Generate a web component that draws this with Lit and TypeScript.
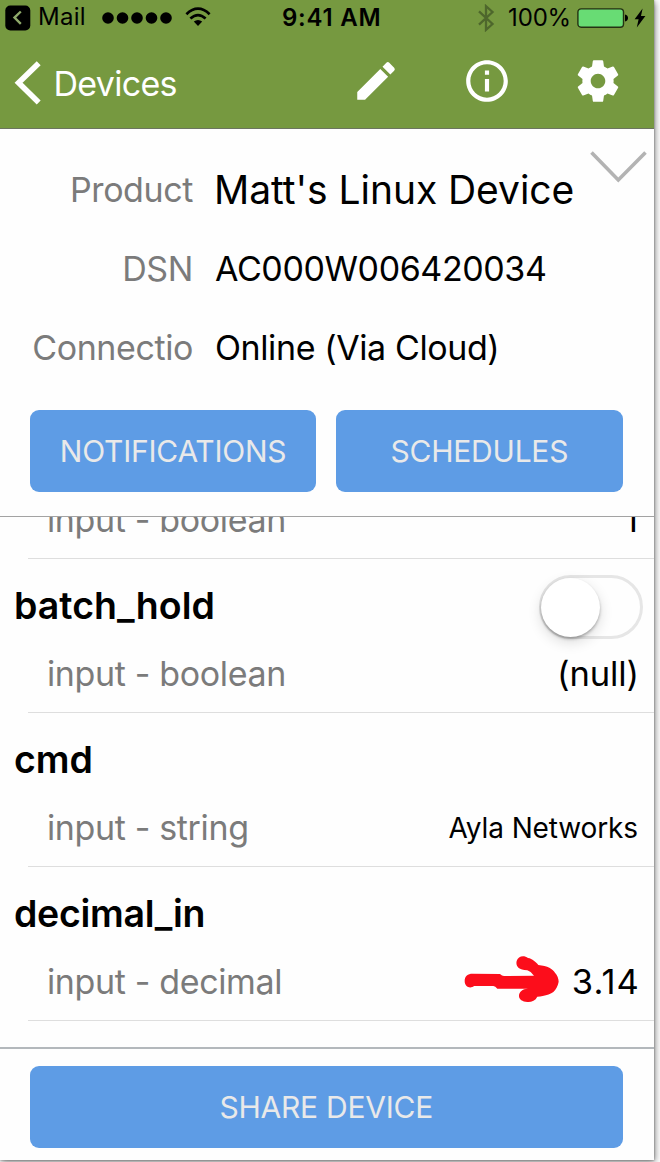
import { LitElement, html, css, svg } from "lit";
import { customElement } from "lit/decorators.js";

interface Property { name: string; type: string; value: string; cls: string; toggle?: boolean; arrow?: boolean; }

const PROPERTIES: Property[] = [
  { name: "", type: "boolean", value: "1", cls: "one" },
  { name: "batch_hold", type: "boolean", value: "(null)", cls: "null", toggle: true },
  { name: "cmd", type: "string", value: "Ayla Networks", cls: "small" },
  { name: "decimal_in", type: "decimal", value: "3.14", cls: "num", arrow: true },
];

@customElement("app-root")
export class AppRoot extends LitElement {
  static styles = css`
    :host { display: block; width: 660px; height: 1162px; overflow: hidden; background: #fff; font-family: Inter, sans-serif; color: #000; }
    * { box-sizing: border-box; }
    svg { display: block; flex: none; }
    .frame { width: 654px; height: 1160px; display: flex; flex-direction: column; background: #fefefe; box-shadow: 0 0 2px rgba(0,0,0,.4), 1px 2px 7px rgba(0,0,0,.5); }
    .top { flex: none; height: 129px; background: #769940; border-bottom: 1px solid #6c7560; }
    .status { height: 35px; display: grid; grid-template-columns: 277px auto 1fr; align-items: center; font-size: 24px; line-height: 35px; padding: 0 8px 0 5px; }
    .left, .right { display: flex; align-items: center; height: 35px; }
    .right { justify-content: flex-end; }
    .mail { margin-left: 7px; letter-spacing: .3px; line-height: 34px; height: 35px; }
    .dots { margin-left: 15px; }
    .wifi { margin-left: 12px; margin-bottom: 1px; }
    .time { font-weight: 600; letter-spacing: .77px; }
    .pct { margin-left: 13px; letter-spacing: -.18px; line-height: 37px; }
    .battery { margin-left: 6px; }
    .bolt { margin-left: 5px; }
    .nav { display: flex; align-items: center; height: 93px; color: #fff; padding: 0 31px 0 14px; }
    .back { display: flex; align-items: center; flex: 1; font-size: 34px; letter-spacing: -.7px; line-height: 40px; padding-top: 3px; gap: 11.5px; }
    .back span { padding-top: 1px; }
    .actions { display: flex; gap: 61px; padding-bottom: 1.5px; }
    .info { flex: none; height: 388px; border-bottom: 1.5px solid #a3a3a3; padding: 21.5px 31.5px 0 30px; position: relative; }
    .field { display: flex; align-items: center; height: 79px; font-size: 34px; line-height: 40px; letter-spacing: -.4px; white-space: nowrap; }
    .label { width: 163px; text-align: right; color: #7b7b7b; margin-right: 22px; }
    .product { font-size: 39px; letter-spacing: -.06px; margin-left: -1px; }
    .collapse { position: absolute; left: 589px; top: 20px; }
    .buttons { display: grid; grid-template-columns: 1fr 1fr; gap: 20px; margin-top: 22.5px; }
    .btn { height: 82px; border-radius: 9px; background: #5e9ce5; color: #e9e9e9; font-size: 30px; letter-spacing: -.23px; font-weight: 400; display: flex; align-items: center; justify-content: center; }
    .list { flex: 1; overflow: hidden; min-height: 0; }
    .row { height: 154px; padding: 23px 16px 0 14px; background: linear-gradient(#dedede, #dedede) 28px 100% / 100% 1.5px no-repeat; }
    .row:first-child { margin-top: -112px; }
    .name, .detail { display: flex; justify-content: space-between; align-items: center; }
    .name { height: 48px; font-size: 37.5px; font-weight: 600; line-height: 48px; }
    .decimal { letter-spacing: -.28px; }
    .detail { height: 48px; margin-top: 19.5px; padding-left: 33px; font-size: 34px; letter-spacing: -.36px; position: relative; }
    .type { color: #7b7b7b; letter-spacing: -.36px; }
    .value { font-size: 34.5px; letter-spacing: -.12px; margin-right: -1px; }
    .value.small { font-size: 28px; margin-right: 0; padding-top: 1px; }
    .value.num { letter-spacing: 1.1px; margin-right: -2px; }
    .value.one { margin-right: 0; }
    .toggle { width: 104px; height: 64px; border-radius: 32px; border: 3px solid #e6e6e6; margin-right: -4.5px; margin-top: 2px; flex: none; }
    .knob { width: 59px; height: 59px; border-radius: 50%; background: #fff; margin: -.5px -1px; box-shadow: 0 5px 14px rgba(0,0,0,.14), 0 2px 3px rgba(0,0,0,.28); }
    .arrow { position: absolute; left: 449.5px; top: -2.5px; }
    .footer { flex: none; height: 113px; border-top: 2px solid #b3b8bc; padding: 16.5px 31.5px 0 30px; }
  `;

  render() {
    return html`
      <div class="frame">
        <header class="top">
          <div class="status">
            <div class="left">
              <svg width="26" height="26" viewBox="0 0 26 26"><rect x=".3" y=".5" width="25" height="25" rx="5"/><path d="M15.8 6.5L9.5 12.6l6.3 6.2" fill="none" stroke="#8fa96a" stroke-width="2.4"/></svg>
              <span class="mail">Mail</span>
              <svg class="dots" width="72" height="14" viewBox="0 0 72 14">${[7, 21.5, 36, 50.5, 65].map((x) => svg`<circle cx=${x} cy="7" r="5.8"/>`)}</svg>
              <svg class="wifi" width="26" height="20" viewBox="0 0 26 20"><g fill="none" stroke="#000" stroke-width="2.7"><path d="M1.4 7.2Q13-3.8 24.6 7.2M5.4 11.6Q13 4.6 20.6 11.6"/></g><path d="M8.8 14.6Q13 11.2 17.2 14.6L13 18.9z"/></svg>
            </div>
            <span class="time">9:41 AM</span>
            <div class="right">
              <svg width="18" height="28" viewBox="0 0 18 28"><path d="M2 7.3L15.5 20 9 25.8V2.2L15.5 8 2 20.7" fill="none" stroke="#4e672c" stroke-width="2.3"/></svg>
              <span class="pct">100%</span>
              <svg class="battery" width="52" height="20" viewBox="0 0 52 20"><rect x=".9" y=".9" width="45.6" height="18.4" rx="3.2" fill="#68dc74" stroke="#253213" stroke-width="1.4"/><path d="M48 6.4q3 .8 3 3.6t-3 3.6z"/></svg>
              <svg class="bolt" width="12" height="20" viewBox="0 0 12 20"><path d="M8.6.5L.6 11.2h4L2.8 19.5 11.4 8H7z"/></svg>
            </div>
          </div>
          <div class="nav">
            <div class="back">
              <svg width="28" height="46" viewBox="0 0 28 46"><path d="M24.7 3.2L4.6 22.8 24.7 42.4" fill="none" stroke="#fff" stroke-width="5.6"/></svg>
              <span>Devices</span>
            </div>
            <div class="actions">
              <svg width="50" height="50" viewBox="0 0 24 24" fill="#fff"><path d="M3 17.25V21h3.75L17.81 9.94l-3.75-3.75L3 17.25zM20.71 7.04a1 1 0 0 0 0-1.41l-2.34-2.34a1 1 0 0 0-1.41 0l-1.83 1.83 3.75 3.75 1.83-1.83z"/></svg>
              <svg width="50" height="50" viewBox="0 0 24 24" fill="#fff"><path d="M11 17h2v-6h-2v6zm1-15C6.48 2 2 6.48 2 12s4.48 10 10 10 10-4.48 10-10S17.52 2 12 2zm0 18c-4.41 0-8-3.59-8-8s3.59-8 8-8 8 3.59 8 8-3.59 8-8 8zM11 9h2V7h-2v2z"/></svg>
              <svg width="50" height="50" viewBox="0 0 24 24" fill="#fff"><path d="M19.43 12.98c.04-.32.07-.64.07-.98s-.03-.66-.07-.98l2.11-1.65c.19-.15.24-.42.12-.64l-2-3.46c-.12-.22-.39-.3-.61-.22l-2.49 1c-.52-.4-1.08-.73-1.69-.98l-.38-2.65C14.46 2.18 14.25 2 14 2h-4c-.25 0-.46.18-.49.42l-.38 2.65c-.61.25-1.17.59-1.69.98l-2.49-1c-.23-.09-.49 0-.61.22l-2 3.46c-.13.22-.07.49.12.64l2.11 1.65c-.04.32-.07.65-.07.98s.03.66.07.98l-2.11 1.65c-.19.15-.24.42-.12.64l2 3.46c.12.22.39.3.61.22l2.49-1c.52.4 1.08.73 1.69.98l.38 2.65c.03.24.24.42.49.42h4c.25 0 .46-.18.49-.42l.38-2.65c.61-.25 1.17-.59 1.69-.98l2.49 1c.23.09.49 0 .61-.22l2-3.46c.12-.22.07-.49-.12-.64l-2.11-1.65zM12 15.5c-1.93 0-3.5-1.57-3.5-3.5s1.57-3.5 3.5-3.5 3.5 1.57 3.5 3.5-1.57 3.5-3.5 3.5z"/></svg>
            </div>
          </div>
        </header>
        <section class="info">
          <div class="field"><span class="label">Product</span><span class="product">Matt's Linux Device</span></div>
          <div class="field"><span class="label">DSN</span><span>AC000W006420034</span></div>
          <div class="field"><span class="label">Connectio</span><span>Online (Via Cloud)</span></div>
          <svg class="collapse" width="60" height="36" viewBox="0 0 60 36"><path d="M2.5 3.5L29.3 31 56.5 3.5" fill="none" stroke="#b3b3b3" stroke-width="3.6"/></svg>
          <div class="buttons"><div class="btn">NOTIFICATIONS</div><div class="btn">SCHEDULES</div></div>
        </section>
        <main class="list">
          ${PROPERTIES.map((p) => html`
            <div class="row">
              <div class="name"><span class=${p.type}>${p.name}</span>${p.toggle ? html`<div class="toggle"><div class="knob"></div></div>` : ""}</div>
              <div class="detail">
                <span class="type">input - ${p.type}</span>
                <span class="value ${p.cls}">${p.value}</span>
                ${p.arrow ? html`<svg class="arrow" width="96.67" height="48.33" viewBox="400 165 290 145"><path fill="#fc0d1b" d="M402 243C402 228 412 221 425 221L508 222Q514 228 520 228L610 227Q600 214 590 211C560 210 555 195 558 183C562 168 580 165 592 174C605 176 616 186 623 195C650 197 668 208 673 218C680 226 684 236 684 245C682 258 676 268 668 276C655 284 645 288 620 290C614 302 602 307 590 306C575 305 565 298 565 288C565 276 575 266 592 266L500 266Q494 258 488 258L430 258C418 268 402 260 402 243Z"/></svg>` : ""}
              </div>
            </div>`)}
        </main>
        <footer class="footer"><div class="btn">SHARE DEVICE</div></footer>
      </div>`;
  }
}
